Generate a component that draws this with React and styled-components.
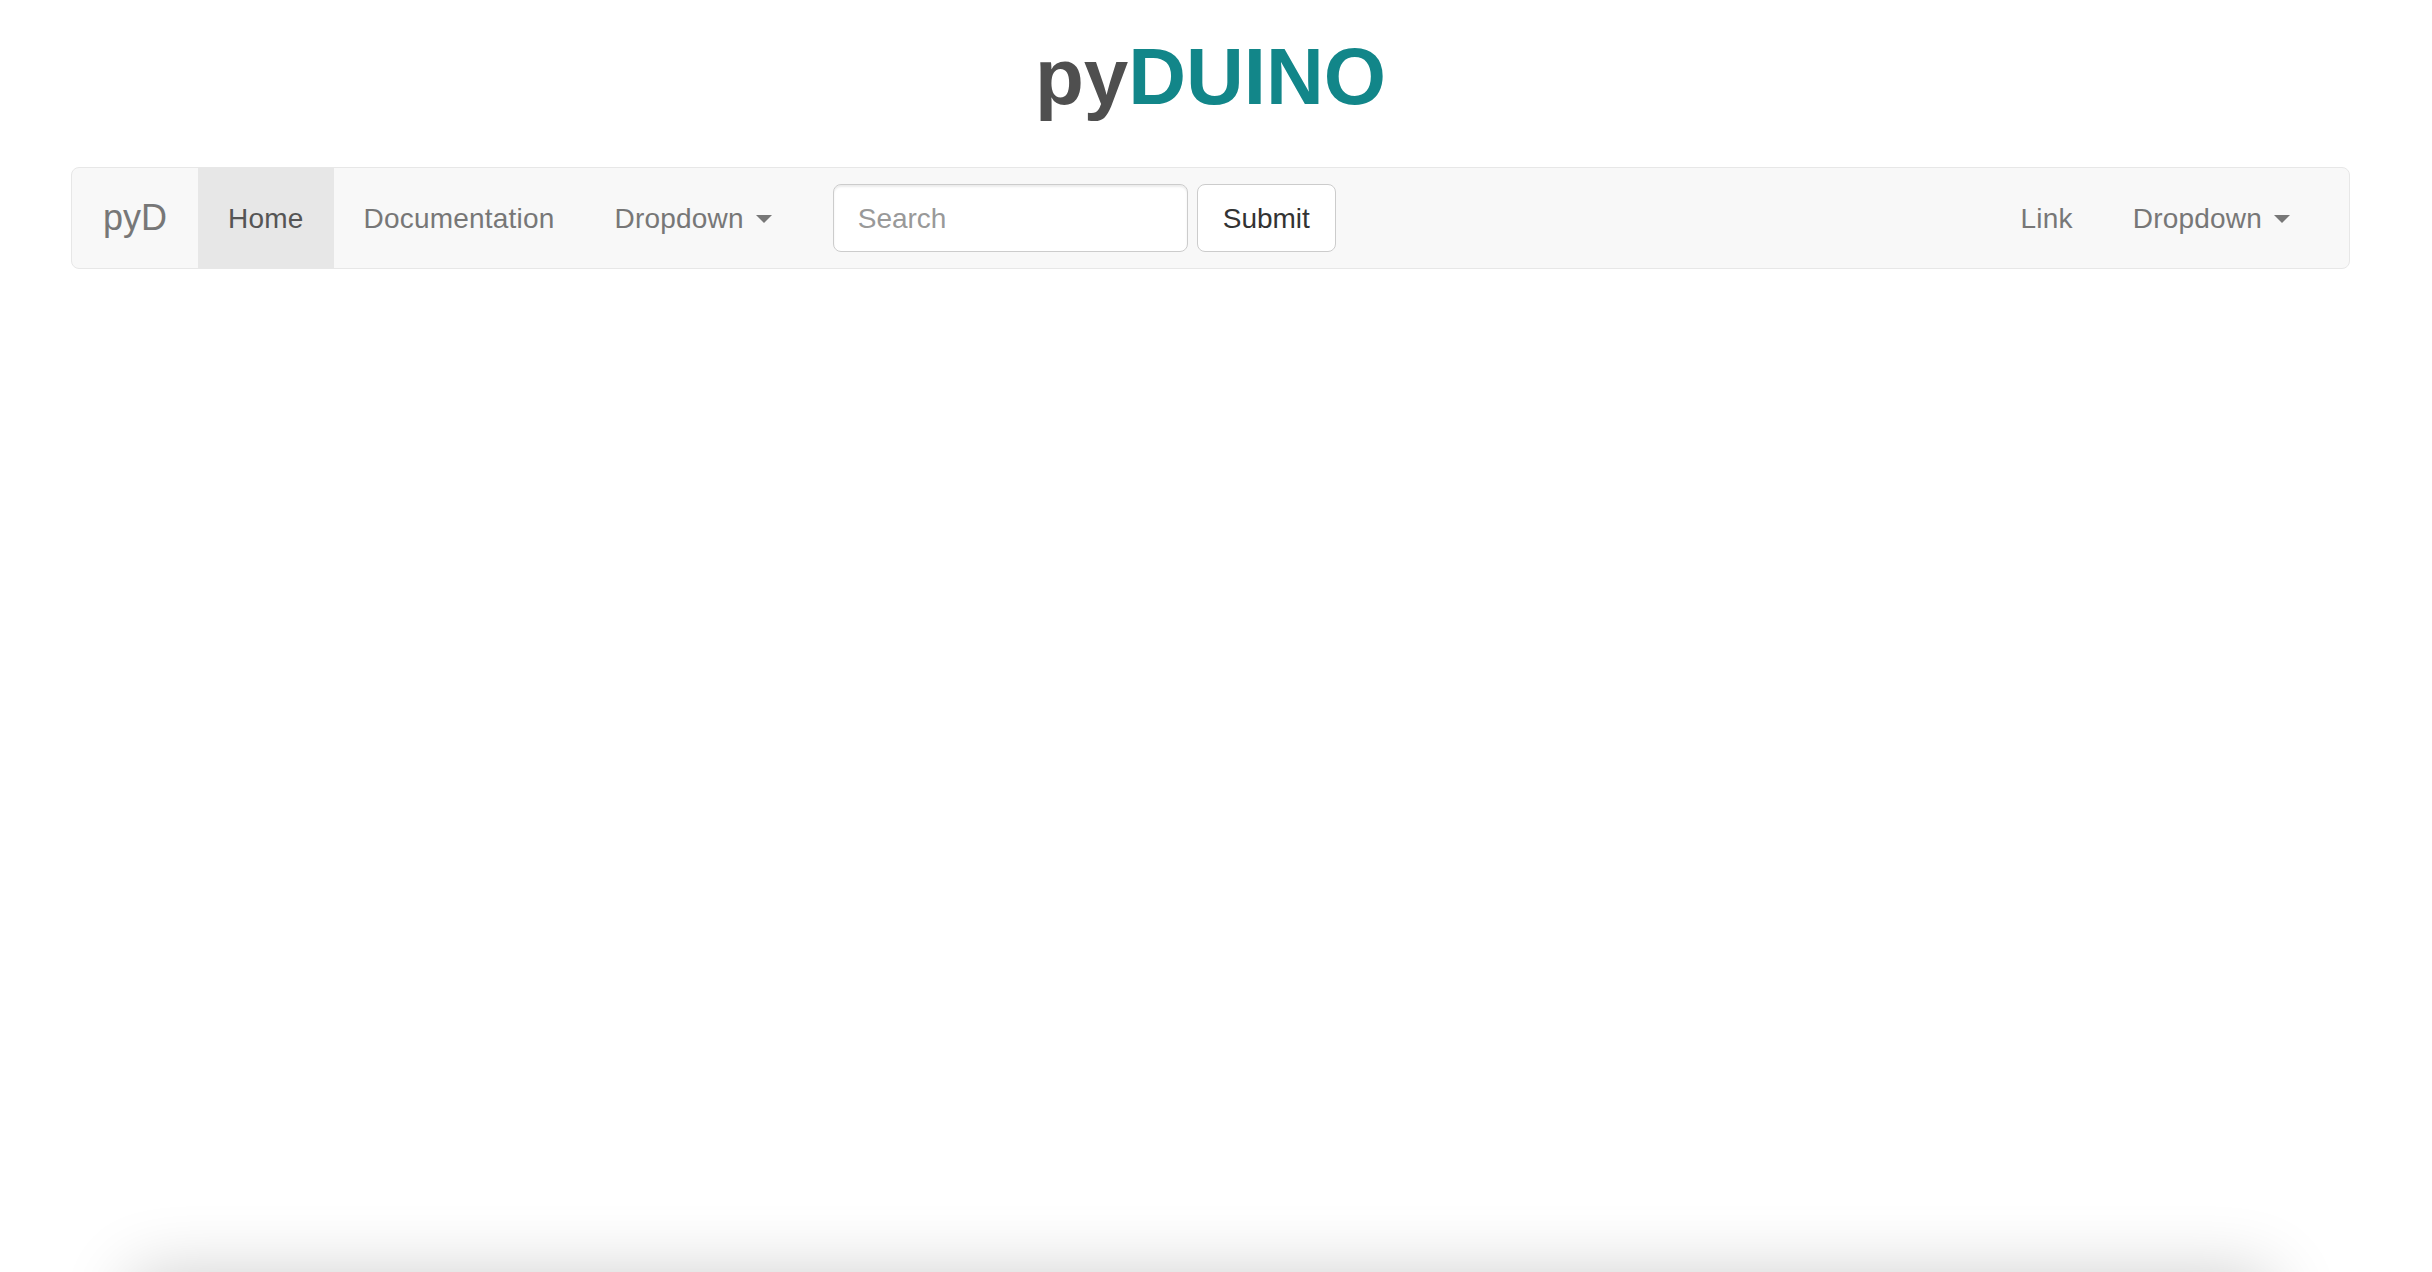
import React from "react"
import styled, { createGlobalStyle } from "styled-components"

const GlobalStyle = createGlobalStyle`
  html, body {
    margin: 0;
    padding: 0;
    overflow: hidden;
    background: #ffffff;
  }
  body {
    font-family: "Liberation Sans", Helvetica, Arial, sans-serif;
  }
  * {
    box-sizing: border-box;
  }
`

const Page = styled.div`
  padding-left: 71px;
  width: 2432px;
`

const Container = styled.div`
  width: 2279px;
`

const Title = styled.h1`
  margin: 33px 0 46px;
  text-align: center;
  font-size: 80px;
  line-height: 88px;
  font-weight: bold;
  color: #4f4f4f;
  span {
    color: #128689;
  }
`

const Navbar = styled.nav`
  display: flex;
  align-items: stretch;
  height: 102px;
  padding-right: 29px;
  background: #f8f8f8;
  border: 1px solid #e7e7e7;
  border-radius: 8px;
`

const Brand = styled.a`
  display: block;
  padding: 30px 31px;
  font-size: 36px;
  line-height: 40px;
  color: #777;
  text-decoration: none;
`

const NavList = styled.ul`
  display: flex;
  margin: 0;
  padding: 0;
  list-style: none;
`

const NavLink = styled.a`
  display: flex;
  align-items: center;
  height: 100%;
  padding: 31px 30px 29px;
  font-size: 28px;
  line-height: 40px;
  letter-spacing: 0.2px;
  text-decoration: none;
  color: ${p => (p.$active ? "#555" : "#777")};
  background: ${p => (p.$active ? "#e7e7e7" : "transparent")};
`

const Caret = styled.span`
  display: inline-block;
  width: 0;
  height: 0;
  margin-left: 12px;
  border-top: 8px solid #777;
  border-left: 8px solid transparent;
  border-right: 8px solid transparent;
`

const SearchForm = styled.form`
  display: flex;
  align-items: center;
  gap: 9px;
  margin: 16px 0;
  padding: 0 30px 0 31px;
`

const SearchInput = styled.input`
  width: 355px;
  height: 68px;
  padding: 13px 24px 11px;
  font-family: inherit;
  font-size: 28px;
  color: #555;
  background: #fff;
  border: 1px solid #ccc;
  border-radius: 8px;
  box-shadow: inset 0 2px 2px rgba(0, 0, 0, 0.075);
  outline: none;
  &::placeholder {
    color: #999;
  }
`

const SubmitButton = styled.button`
  height: 68px;
  padding: 13px 25px 11px;
  font-family: inherit;
  font-size: 28px;
  line-height: 40px;
  color: #333;
  background: #fff;
  border: 1px solid #ccc;
  border-radius: 8px;
`

const Spacer = styled.div`
  flex: 1;
`

const Card = styled.section`
  margin: 1005px 0 0 60px;
  width: 2140px;
  height: 400px;
  background: #fff;
  border-radius: 10px;
  box-shadow: 0 0 70px rgba(0, 0, 0, 0.2);
`

export default function App() {
  return (
    <>
      <GlobalStyle />
      <Page>
        <Container>
          <Title>
            py<span>DUINO</span>
          </Title>
          <Navbar>
            <Brand href="#">pyD</Brand>
            <NavList>
              <li>
                <NavLink href="#" $active>
                  Home
                </NavLink>
              </li>
              <li>
                <NavLink href="#">Documentation</NavLink>
              </li>
              <li>
                <NavLink href="#">
                  Dropdown
                  <Caret />
                </NavLink>
              </li>
            </NavList>
            <SearchForm onSubmit={e => e.preventDefault()}>
              <SearchInput type="text" placeholder="Search" />
              <SubmitButton type="submit">Submit</SubmitButton>
            </SearchForm>
            <Spacer />
            <NavList>
              <li>
                <NavLink href="#">Link</NavLink>
              </li>
              <li>
                <NavLink href="#">
                  Dropdown
                  <Caret />
                </NavLink>
              </li>
            </NavList>
          </Navbar>
          <Card />
        </Container>
      </Page>
    </>
  )
}
